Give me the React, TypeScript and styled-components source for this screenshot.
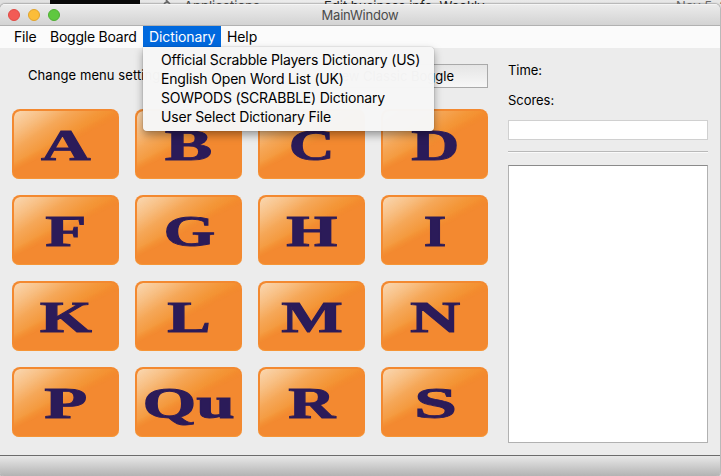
import React from 'react';
import styled, { createGlobalStyle } from 'styled-components';

const GlobalStyle = createGlobalStyle`
  * { box-sizing: border-box; }
  body { margin: 0; background: #e9e9e9; overflow: hidden; }
`;

const Desktop = styled.div`
  width: 721px;
  height: 476px;
  overflow: hidden;
  position: relative;
  display: flex;
  flex-direction: column;
  background: linear-gradient(90deg, #e0e0e0, #ebebeb 40%, #e6e6e6);
  font-family: Inter, "Liberation Sans", sans-serif;
  font-size: 14px;
  color: #000;
`;

const Backdrop = styled.div`
  height: 4px;
  flex: none;
  position: relative;
  overflow: hidden;
`;

const DarkStrip = styled.div`
  margin-left: 50px;
  width: 90px;
  height: 4px;
  background: #080808;
`;

const BackdropIcon = styled.svg`
  position: absolute;
  left: 162px;
  top: 0;
  width: 10px;
  height: 4px;
`;

const Peek = styled.span<{ $x: number; $tone: string; $top: number }>`
  position: absolute;
  left: ${p => p.$x}px;
  top: ${p => p.$top}px;
  font-size: 13px;
  line-height: 14px;
  white-space: nowrap;
  color: ${p => p.$tone};
`;

const Window = styled.div`
  width: 720px;
  height: 472px;
  display: flex;
  flex-direction: column;
  background: #ececec;
  border-radius: 5px 5px 4px 4px;
  overflow: hidden;
  box-shadow: 0 0 2px rgba(0, 0, 0, 0.75);
`;

const TitleBar = styled.div`
  height: 22px;
  flex: none;
  display: grid;
  grid-template-columns: 68px 1fr 68px;
  align-items: center;
  background: linear-gradient(#ebebeb, #d3d3d3);
  border-top: 1px solid #f5f5f5;
  border-bottom: 1px solid #b1b1b1;
`;

const Lights = styled.div`
  display: flex;
  gap: 8px;
  padding-left: 8px;
`;

const Light = styled.i<{ $fill: string; $edge: string }>`
  width: 12px;
  height: 12px;
  border-radius: 50%;
  background: ${p => p.$fill};
  border: 1px solid ${p => p.$edge};
`;

const Title = styled.div`
  text-align: center;
  font-size: 13px;
  line-height: 18px;
  color: #4b4b4b;
  letter-spacing: -0.2px;
`;

const MenuBar = styled.div`
  height: 22px;
  flex: none;
  display: flex;
  padding-left: 8px;
  background: #fbfbfb;
`;

const MenuItem = styled.div<{ $width: number; $active?: boolean; $spacing: number }>`
  position: relative;
  width: ${p => p.$width}px;
  height: 21px;
  padding-left: 6px;
  line-height: 22px;
  white-space: nowrap;
  letter-spacing: ${p => p.$spacing}px;
  color: ${p => (p.$active ? '#fff' : '#000')};
  background: ${p => (p.$active ? '#0069de' : 'transparent')};
`;

const Dropdown = styled.div`
  position: absolute;
  z-index: 5;
  top: 21px;
  left: 0;
  width: 291px;
  height: 84px;
  padding: 3px 0 0 18px;
  background: rgba(246, 246, 246, 0.985);
  border-radius: 0 4px 4px 4px;
  box-shadow: 0 0 1px rgba(0, 0, 0, 0.5), 0 4px 9px rgba(0, 0, 0, 0.36);
  color: #000;
`;

const Option = styled.div<{ $spacing: number }>`
  height: 19px;
  line-height: 19px;
  letter-spacing: ${p => p.$spacing}px;
`;

const Content = styled.div`
  flex: 1;
  display: grid;
  grid-template-columns: 476px 200px;
  column-gap: 20px;
  padding: 0 12px;
`;

const Game = styled.div`
  display: flex;
  flex-direction: column;
`;

const Hint = styled.div`
  display: grid;
  grid-template-columns: 215px 245px;
  justify-content: end;
  height: 23px;
  margin: 16px 0 22px;
  font-size: 13px;
  line-height: 23px;
  white-space: nowrap;
`;

const HintText = styled.span`
  letter-spacing: 0.08px;
  overflow: hidden;
`;

const NewGame = styled.div`
  border: 1px solid #a9a9a9;
  background: linear-gradient(#e5e5e5, #f7f7f7);
  line-height: 22px;
  padding-right: 33px;
  text-align: right;
`;

const Board = styled.div`
  display: grid;
  grid-template-columns: repeat(4, 107px);
  grid-auto-rows: 70px;
  gap: 16px;
`;

const Tile = styled.div`
  position: relative;
  display: flex;
  align-items: center;
  justify-content: center;
  overflow: hidden;
  border-radius: 8px 8px 7px 7px;
  background: #f38930;
  box-shadow: inset 0 -1px 1px rgba(248, 160, 60, 0.6);

  &::before {
    content: '';
    position: absolute;
    inset: 2px 1px 0 1.5px;
    border-radius: 6px 6px 0 0;
    background: linear-gradient(146deg, rgba(250, 220, 185, 0.95) 0%, rgba(248, 200, 145, 0.85) 16%, rgba(246, 178, 102, 0.75) 28%, rgba(244, 156, 60, 0.75) 42%, rgba(243, 141, 44, 0.8) 52%);
    mask-image: linear-gradient(153deg, #000 42%, transparent 50%);
  }
`;

const Letter = styled.span<{ $stretch: number; $shift: number }>`
  position: relative;
  font-family: "Liberation Serif", serif;
  font-weight: 700;
  font-size: 43.5px;
  line-height: 70px;
  color: #2b1b59;
  -webkit-text-stroke: 0.9px #2b1b59;
  transform: translate(${p => p.$shift}px, 1px) scaleX(${p => p.$stretch});
`;

const Side = styled.div`
  display: flex;
  flex-direction: column;
  font-size: 13px;
`;

const Label = styled.div<{ $top: number }>`
  margin-top: ${p => p.$top}px;
  height: 18px;
  line-height: 18px;
  letter-spacing: -0.05px;
`;

const WordInput = styled.div`
  height: 20px;
  margin-top: 11px;
  background: #fff;
  border: 1px solid #d0d0d0;
`;

const Rule = styled.div`
  height: 2px;
  margin: 11px 0 12px;
  background: #fafafa;
  border-top: 1px solid #b9b9b9;
`;

const WordList = styled.div`
  height: 278px;
  background: #fff;
  border: 1px solid #b1b1b1;
  border-top-color: #8a8a8a;
`;

const StatusBar = styled.div`
  height: 21px;
  flex: none;
  border-top: 1px solid #6c6c6c;
  background: linear-gradient(#e8e8e8, #b3b3b3);
`;

const tiles: [string, number, number][] = [
  ['A', 1.58, 0], ['B', 1.64, 0], ['C', 1.46, 0], ['D', 1.53, 0.5],
  ['F', 1.55, 0.5], ['G', 1.53, 0.5], ['H', 1.51, 0], ['I', 1.33, 0.5],
  ['K', 1.54, 0], ['L', 1.5, 0.5], ['M', 1.5, 0.5], ['N', 1.6, 0.5],
  ['P', 1.62, 0.5], ['Qu', 1.59, 0.5], ['R', 1.5, 0], ['S', 1.78, 1.5],
];

const dictionaries: [string, number][] = [
  ['Official Scrabble Players Dictionary (US)', -0.18],
  ['English Open Word List (UK)', -0.18],
  ['SOWPODS (SCRABBLE) Dictionary', -0.22],
  ['User Select Dictionary File', -0.18],
];

export default function App() {
  return (
    <>
      <GlobalStyle />
      <Desktop>
        <Backdrop>
          <DarkStrip />
          <BackdropIcon viewBox="0 0 10 4">
            <path d="M4 0l4 4M5 1L2 4" stroke="#666" strokeWidth="1.6" fill="none" />
          </BackdropIcon>
          <Peek $x={184} $top={-1} $tone="#444">Applications</Peek>
          <Peek $x={324} $top={-1} $tone="#222">Edit business info, Weekly</Peek>
          <Peek $x={676} $top={-1} $tone="#666">Nov 5, 2</Peek>
        </Backdrop>
        <Window>
          <TitleBar>
            <Lights>
              <Light $fill="#f25b55" $edge="#df4a44" />
              <Light $fill="#fbbd39" $edge="#e0a32c" />
              <Light $fill="#5fc83f" $edge="#4fae33" />
            </Lights>
            <Title>MainWindow</Title>
          </TitleBar>
          <MenuBar>
            <MenuItem $width={36} $spacing={-0.2}>File</MenuItem>
            <MenuItem $width={99} $spacing={-0.23}>Boggle Board</MenuItem>
            <MenuItem $width={78} $spacing={-0.1} $active>
              Dictionary
              <Dropdown>
                {dictionaries.map(([name, spacing]) => (
                  <Option key={name} $spacing={spacing}>{name}</Option>
                ))}
              </Dropdown>
            </MenuItem>
            <MenuItem $width={42} $spacing={-0.1}>Help</MenuItem>
          </MenuBar>
          <Content>
            <Game>
              <Hint>
                <HintText>Change menu setting</HintText>
                <NewGame>New Classic Boggle</NewGame>
              </Hint>
              <Board>
                {tiles.map(([letter, stretch, shift]) => (
                  <Tile key={letter}><Letter $stretch={stretch} $shift={shift}>{letter}</Letter></Tile>
                ))}
              </Board>
            </Game>
            <Side>
              <Label $top={13}>Time:</Label>
              <Label $top={12}>Scores:</Label>
              <WordInput />
              <Rule />
              <WordList />
            </Side>
          </Content>
          <StatusBar />
        </Window>
      </Desktop>
    </>
  );
}
